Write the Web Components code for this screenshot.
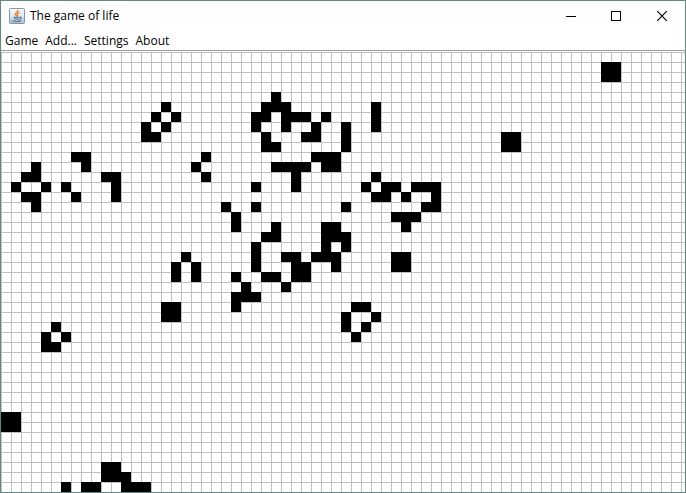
<!DOCTYPE html>
<html lang="en">
<head>
<meta charset="utf-8">
<title>The game of life</title>
<style>
  html, body { height: 100%; }
  body { margin: 0; background: #fff; color: #000; font: 12px/16px "Open Sans", "Noto Sans", sans-serif; }
</style>
</head>
<body>
<app-window>
  <title-bar slot="title">The game of life</title-bar>
  <menu-bar slot="menu">
    <menu-entry>Game</menu-entry>
    <menu-entry>Add...</menu-entry>
    <menu-entry>Settings</menu-entry>
    <menu-entry>About</menu-entry>
  </menu-bar>
  <life-board></life-board>
</app-window>
<script>
class BaseElement extends HTMLElement {
  constructor() {
    super();
    this.attachShadow({ mode: "open" }).innerHTML = this.constructor.markup;
  }
}

class AppWindow extends BaseElement {
  static markup = `
    <style>
      :host { display: flex; flex-direction: column; box-sizing: border-box; height: 100vh;
              border: 1px solid #5f8880; background: #fff; overflow: hidden; }
      header { flex: none; border-bottom: 1px solid #a0a0a0; }
      main { flex: 1; min-height: 0; display: flex; padding-top: 1px; }
    </style>
    <header><slot name="title"></slot><slot name="menu"></slot></header>
    <main><slot></slot></main>`;
}

class TitleBar extends BaseElement {
  static markup = `
    <style>
      :host { display: flex; align-items: center; height: 29px; padding-left: 8px; }
      .icon { flex: none; margin-right: 5px; }
      h1 { flex: 1; margin: 0; font: inherit; white-space: nowrap; }
      button { width: 46px; height: 29px; padding: 0; border: 0; background: none;
               display: grid; place-items: center; }
      button:hover { background: #e5e5e5; }
      nav { display: flex; }
    </style>
    <svg class="icon" width="16" height="16" viewBox="0 0 16 16" aria-hidden="true">
      <defs><linearGradient id="g" x1="0" y1="0" x2="0" y2="1">
        <stop offset="0" stop-color="#fbfcfd"/><stop offset=".5" stop-color="#dfe6ec"/><stop offset="1" stop-color="#a9bccb"/>
      </linearGradient></defs>
      <rect x=".5" y=".5" width="15" height="15" rx="1" fill="url(#g)" stroke="#7f97aa"/>
      <path d="M9 1.800C9.600 4 6 4.600 6.300 6.300C6.400 7.200 7.600 7.700 7.600 8.600M10.700 4.300C9 5 7.700 5.600 8.300 6.700C8.700 7.400 8.900 7.700 8.300 8.600" fill="none" stroke="#e8802c" stroke-width="1.300"/>
      <path d="M4.500 9.300H10.200M5 11H10M10.600 9.200C12.800 8.600 12.600 10.900 10.600 11.300M3.500 12.700C5.500 13.700 10 13.700 12 12.600" fill="none" stroke="#48708f" stroke-width="1.100"/>
    </svg>
    <h1><slot></slot></h1>
    <nav>
      <button aria-label="Minimize"><svg width="12" height="10"><rect x="2" y="5" width="10" height="1"/></svg></button>
      <button aria-label="Maximize"><svg width="10" height="10"><rect x=".5" y=".5" width="9" height="9" fill="none" stroke="#000"/></svg></button>
      <button aria-label="Close"><svg width="10" height="10"><path d="M0 0L10 10M10 0L0 10" stroke="#000" stroke-width="1.200"/></svg></button>
    </nav>`;
}

class MenuBar extends BaseElement {
  static markup = `
    <style>:host { display: flex; box-sizing: border-box; gap: 7px; height: 20px; padding: 2px 4px 0; align-items: center; }</style>
    <slot></slot>`;
}

class MenuEntry extends BaseElement {
  static markup = `
    <style>
      :host { display: block; }
      button { display: block; padding: 0; border: 0; background: none; color: inherit; font: inherit; }
    </style>
    <button><slot></slot></button>`;
}

/* Live cells: one [row, columns...] list per occupied row. */
const LIVE = [
  [1, 60, 61], [2, 60, 61],
  [4, 27],
  [5, 16, 26, 27, 28, 37],
  [6, 15, 17, 25, 26, 28, 29, 30, 32, 37],
  [7, 14, 16, 25, 28, 31, 34, 37],
  [8, 14, 15, 26, 30, 31, 34, 50, 51],
  [9, 26, 27, 34, 50, 51],
  [10, 7, 8, 20, 31, 32, 33],
  [11, 3, 8, 19, 27, 28, 29, 30, 32, 33],
  [12, 2, 3, 10, 11, 20, 29, 37],
  [13, 1, 4, 6, 11, 25, 29, 36, 38, 39, 41, 42, 43],
  [14, 2, 3, 7, 11, 37, 38, 40, 43],
  [15, 3, 22, 25, 34, 42, 43],
  [16, 23, 39, 40, 41],
  [17, 23, 27, 32, 33, 40],
  [18, 26, 27, 32, 33, 34],
  [19, 25, 32, 34],
  [20, 18, 25, 28, 29, 31, 32, 33, 39, 40],
  [21, 17, 19, 25, 29, 30, 33, 39, 40],
  [22, 17, 19, 23, 26, 27, 29, 30],
  [23, 24, 28],
  [24, 23, 24, 25],
  [25, 16, 17, 23, 35, 36],
  [26, 16, 17, 34, 37],
  [27, 5, 34, 36],
  [28, 4, 6, 35],
  [29, 4, 5],
  [36, 0, 1], [37, 0, 1],
  [41, 10, 11], [42, 10, 11, 12],
  [43, 6, 8, 9, 12, 13, 14]
];

class LifeBoard extends BaseElement {
  static markup = `
    <style>
      :host { display: block; flex: 1; min-width: 0; overflow: hidden; }
      svg { display: block; width: 100%; height: 100%; }
    </style>
    <svg role="img" aria-label="Cell grid" shape-rendering="crispEdges">
      <defs><pattern id="grid" width="10" height="10" patternUnits="userSpaceOnUse">
        <path d="M0 0H10V1H1V10H0Z" fill="#c0c0c0"/>
      </pattern></defs>
      <rect width="100%" height="100%" fill="url(#grid)"/>
      <path class="cells"/>
    </svg>`;
  connectedCallback() {
    const d = LIVE.flatMap(([row, ...cols]) => cols.map(c => `M${c * 10} ${row * 10}h10v10h-10z`)).join("");
    this.shadowRoot.querySelector(".cells").setAttribute("d", d);
  }
}

customElements.define("app-window", AppWindow);
customElements.define("title-bar", TitleBar);
customElements.define("menu-bar", MenuBar);
customElements.define("menu-entry", MenuEntry);
customElements.define("life-board", LifeBoard);
</script>
</body>
</html>
